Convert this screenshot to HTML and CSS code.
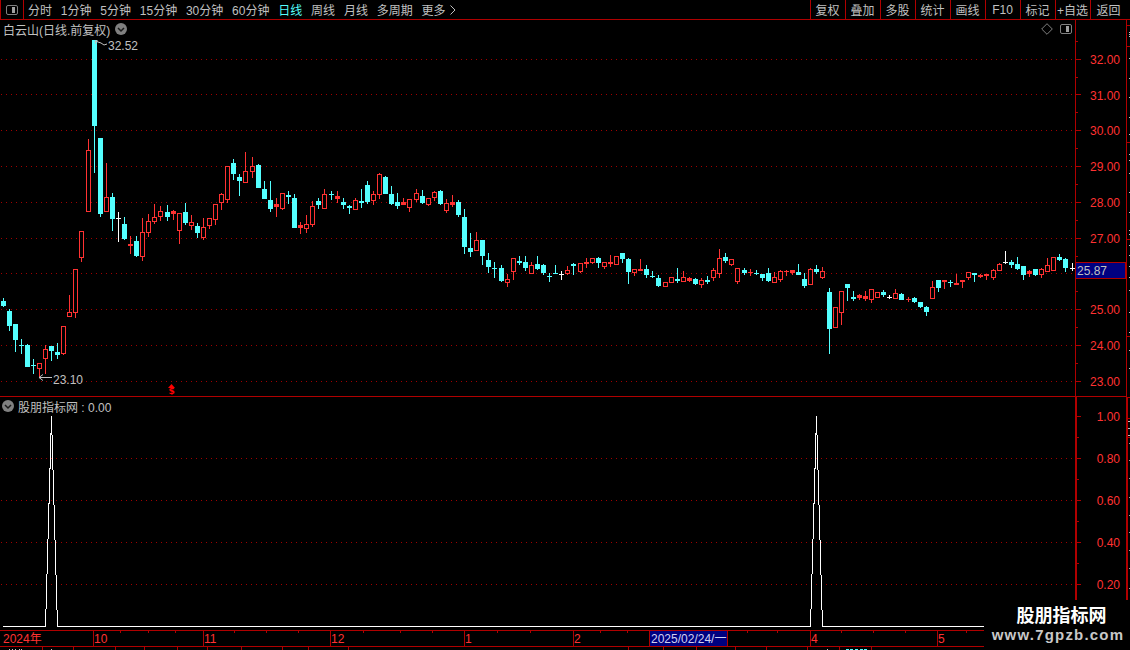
FILE: index.html
```html
<!DOCTYPE html>
<html lang="zh-CN">

<head>
  <meta charset="UTF-8">
  <meta name="viewport" content="width=device-width, initial-scale=1.0">
  <title>白云山 日线</title>
  <link rel="stylesheet" href="styles.css">
</head>

<body>
  <div class="app">
    <header class="toolbar">
      <div class="tool-left">
        <div class="layout-cell">
          <svg class="icon-layout" viewBox="0 0 12 10"><rect x="0.5" y="0.5" width="11" height="9" rx="1.5" /><rect class="fill" x="6" y="2" width="3" height="6" /></svg>
        </div>
        <nav class="periods">
          <span>分时</span>
          <span>1分钟</span>
          <span>5分钟</span>
          <span>15分钟</span>
          <span>30分钟</span>
          <span>60分钟</span>
          <span class="period-active">日线</span>
          <span>周线</span>
          <span>月线</span>
          <span>多周期</span>
          <span>更多 <svg class="icon-more" viewBox="0 0 6 10"><path d="M0.5 0.5 L5 5 L0.5 9.5" /></svg></span>
        </nav>
      </div>
      <div class="tool-right">
        <span class="tool-btn">复权</span>
        <span class="tool-btn">叠加</span>
        <span class="tool-btn">多股</span>
        <span class="tool-btn">统计</span>
        <span class="tool-btn">画线</span>
        <span class="tool-btn">F10</span>
        <span class="tool-btn">标记</span>
        <span class="tool-btn">+自选</span>
        <span class="tool-btn tool-btn-last">返回</span>
      </div>
    </header>

    <div class="panes">
      <div class="charts">
        <section class="pane pane-main">
          <div class="plot">
            <svg id="mainPlot" class="chart" width="1075" height="376" viewBox="0 20 1075 376"></svg>
            <div class="pane-head">
              <div class="head-left">
                <span>白云山(日线.前复权)</span>
                <svg class="icon-toggle" viewBox="0 0 12 12"><circle cx="6" cy="6" r="6" /><path d="M3 5 L6 8 L9 5" /></svg>
              </div>
              <div class="head-right">
                <svg class="icon-diamond" viewBox="0 0 12 12"><path d="M6 0.7 L11.3 6 L6 11.3 L0.7 6 Z" /></svg>
                <svg class="icon-layout" viewBox="0 0 12 10"><rect x="0.5" y="0.5" width="11" height="9" rx="1.5" /><rect class="fill" x="6" y="2" width="3" height="6" /></svg>
              </div>
            </div>
          </div>
          <svg id="mainAxis" class="chart" width="51" height="376" viewBox="1075 20 51 376"></svg>
        </section>

        <section class="pane pane-sub">
          <div class="plot">
            <svg id="subPlot" class="chart" width="1075" height="233" viewBox="0 397 1075 233"></svg>
            <div class="pane-head pane-head-sub">
              <div class="head-left">
                <svg class="icon-toggle" viewBox="0 0 12 12"><circle cx="6" cy="6" r="6" /><path d="M3 5 L6 8 L9 5" /></svg>
                <span>股朋指标网 : 0.00</span>
              </div>
            </div>
          </div>
          <svg id="subAxis" class="chart" width="51" height="233" viewBox="1075 397 51 233"></svg>
        </section>
      </div>
      <svg id="sideStrip" class="chart" width="4" height="610" viewBox="1126 20 4 610"></svg>
    </div>

    <svg id="timeAxis" class="chart" width="1130" height="20" viewBox="0 630 1130 20"></svg>

    <div class="watermark">
      <div class="watermark-name">股朋指标网</div>
      <div class="watermark-url">www.7gpzb.com</div>
    </div>
  </div>
  <script src="chart.js"></script>
</body>

</html>
```

FILE: styles.css
```css
* {
  margin: 0;
  padding: 0;
  box-sizing: border-box;
}

body {
  background-color: #000;
  color: #c0c0c0;
  font-family: "Liberation Sans", "Noto Sans CJK SC", sans-serif;
  font-size: 12px;
  overflow: hidden;
}

.app {
  position: relative;
  display: flex;
  flex-direction: column;
  width: 1130px;
  height: 650px;
  overflow: hidden;
}

.toolbar {
  display: flex;
  justify-content: space-between;
  flex: none;
  height: 20px;
  border-bottom: 1px solid #b00000;
}

.tool-left {
  display: flex;
}

.layout-cell {
  display: flex;
  align-items: center;
  justify-content: center;
  width: 24px;
  border-left: 1px solid #b00000;
  border-right: 1px solid #b00000;
}

.icon-layout {
  display: block;
  width: 12px;
  height: 10px;
}

.icon-layout rect {
  fill: none;
  stroke: #808080;
}

.icon-layout .fill {
  fill: #a0a0a0;
  stroke: none;
}

.periods {
  display: flex;
  align-items: center;
  gap: 8.8px;
  padding-left: 4px;
}

.period-active {
  color: #54fcfc;
}

.icon-more {
  width: 6px;
  height: 10px;
  margin-left: 1px;
}

.icon-more path {
  fill: none;
  stroke: #c0c0c0;
}

.tool-right {
  display: flex;
  margin-right: 3px;
}

.tool-btn {
  display: flex;
  align-items: center;
  justify-content: center;
  width: 35px;
  padding-right: 1px;
  border-left: 1px solid #b00000;
}

.tool-btn-last {
  width: 37px;
}

.panes {
  display: flex;
  flex: none;
  height: 610px;
}

.charts {
  width: 1126px;
}

.pane {
  display: flex;
}

.pane-main {
  height: 377px;
  border-bottom: 1px solid #b00000;
}

.pane-sub {
  height: 233px;
}

.plot {
  position: relative;
  width: 1075px;
}

.chart {
  display: block;
  flex: none;
}

.pane-head {
  position: absolute;
  top: 0;
  left: 0;
  display: flex;
  justify-content: space-between;
  align-items: center;
  width: 100%;
  height: 18px;
  padding: 0 3px;
}

.pane-head-sub {
  padding-left: 2px;
}

.head-left,
.head-right {
  display: flex;
  align-items: center;
}

.head-left {
  gap: 5px;
}

.pane-head-sub .head-left {
  gap: 4px;
}

.head-right {
  gap: 7px;
}

.icon-toggle {
  display: block;
  width: 12px;
  height: 12px;
}

.icon-toggle circle {
  fill: #808080;
}

.icon-toggle path {
  fill: none;
  stroke: #1a1a1a;
  stroke-width: 1.5;
}

.icon-diamond {
  display: block;
  width: 12px;
  height: 12px;
}

.icon-diamond path {
  fill: none;
  stroke: #808080;
}

.chart text {
  font-family: "Liberation Sans", "Noto Sans CJK SC", sans-serif;
  font-size: 12px;
}

.chart .label-red {
  fill: #ff3232;
}

.chart .label-gray {
  fill: #c0c0c0;
}

.chart .label-date {
  fill: #d0d0f0;
}

.chart .signal {
  fill: #ff0000;
  font-family: "DejaVu Sans", sans-serif;
  font-size: 9px;
  font-weight: bold;
}

.grid-line {
  stroke: #a00000;
  stroke-dasharray: 1 4;
  shape-rendering: crispEdges;
}

.spike-line {
  fill: none;
  stroke: #fff;
  shape-rendering: crispEdges;
}

.mark-arrow {
  fill: none;
  stroke: #c0c0c0;
}

.watermark {
  position: absolute;
  right: 0;
  bottom: 0;
  display: flex;
  flex-direction: column;
  align-items: center;
  width: 146px;
  height: 50px;
  padding: 3px 0 0 2px;
  background-color: #000;
}

.watermark-name {
  margin-left: 7px;
  color: #fff;
  font-family: "Noto Sans CJK SC", sans-serif;
  font-size: 18px;
  font-weight: bold;
  line-height: 22px;
}

.watermark-url {
  margin-top: 1px;
  color: #c8c8c8;
  font-size: 15px;
  font-weight: bold;
  letter-spacing: 1.2px;
  line-height: 18px;
}
```

FILE: chart.js
```js
const RED = '#ff3232';
const CYAN = '#54ffff';
const WHITE = '#ffffff';
const LINE_RED = '#b00000';

// 每根K线: 颜色, 最高, 实体上沿, 实体下沿, 最低 (页面像素)
const candles = [
  ['c', 298, 301, 306, 307], ['c', 309, 311, 326, 331], ['c', 324, 324, 340, 352], ['c', 339, 345, 346, 354],
  ['c', 344, 345, 367, 367], ['c', 359, 365, 366, 374], ['r', 363, 363, 369, 377], ['r', 345, 349, 359, 374],
  ['c', 346, 346, 351, 361], ['c', 343, 352, 355, 359], ['r', 326, 326, 354, 355], ['r', 295, 312, 317, 317],
  ['r', 269, 269, 313, 318], ['r', 231, 231, 258, 262], ['r', 139, 150, 212, 212], ['c', 40, 40, 126, 173],
  ['c', 138, 138, 214, 217], ['r', 163, 197, 212, 212], ['c', 193, 197, 219, 231], ['w', 212, 218, 219, 242],
  ['c', 217, 224, 239, 240], ['r', 236, 244, 246, 254], ['c', 236, 241, 256, 257], ['r', 218, 232, 257, 261],
  ['r', 214, 221, 233, 237], ['r', 204, 217, 222, 224], ['r', 206, 211, 217, 221], ['c', 205, 212, 217, 221],
  ['r', 210, 211, 214, 220], ['r', 213, 213, 231, 244], ['c', 203, 212, 223, 225], ['r', 215, 222, 226, 230],
  ['c', 223, 226, 233, 238], ['r', 218, 227, 238, 240], ['r', 218, 218, 226, 229], ['r', 204, 204, 220, 225],
  ['r', 193, 194, 203, 210], ['r', 166, 166, 200, 203], ['c', 159, 163, 174, 180], ['c', 174, 177, 181, 196],
  ['r', 152, 171, 183, 183], ['r', 157, 166, 172, 178], ['c', 164, 165, 188, 188], ['c', 181, 189, 199, 199],
  ['c', 181, 200, 209, 212], ['r', 198, 204, 207, 217], ['r', 193, 193, 209, 210], ['c', 191, 195, 197, 204],
  ['c', 194, 198, 228, 228], ['r', 222, 225, 228, 234], ['r', 215, 224, 229, 233], ['r', 201, 206, 225, 227],
  ['c', 198, 201, 205, 209], ['r', 189, 194, 209, 209], ['c', 191, 194, 195, 200], ['r', 191, 196, 199, 203],
  ['c', 198, 202, 205, 209], ['c', 205, 206, 208, 214], ['r', 198, 200, 210, 210], ['c', 189, 201, 203, 208],
  ['c', 181, 185, 202, 204], ['r', 191, 194, 201, 205], ['r', 173, 174, 195, 199], ['c', 176, 177, 194, 194],
  ['c', 186, 194, 204, 205], ['c', 193, 202, 206, 209], ['r', 198, 202, 205, 205], ['r', 199, 199, 208, 212],
  ['r', 189, 193, 200, 202], ['c', 190, 196, 203, 204], ['r', 198, 198, 205, 206], ['r', 191, 192, 198, 201],
  ['c', 190, 191, 204, 205], ['r', 199, 203, 211, 213], ['r', 195, 202, 205, 207], ['c', 200, 202, 215, 217],
  ['c', 209, 217, 247, 254], ['c', 233, 248, 252, 257], ['r', 232, 240, 251, 251], ['c', 240, 240, 256, 265],
  ['c', 253, 260, 267, 273], ['c', 262, 268, 269, 278], ['c', 265, 268, 281, 282], ['r', 274, 279, 283, 287],
  ['r', 258, 258, 272, 280], ['c', 256, 261, 263, 265], ['c', 256, 262, 268, 271], ['r', 262, 265, 274, 274],
  ['c', 256, 264, 269, 270], ['c', 264, 265, 273, 275], ['c', 273, 276, 277, 282], ['c', 265, 273, 274, 274],
  ['w', 271, 274, 275, 280], ['r', 266, 270, 274, 275], ['c', 263, 264, 266, 275], ['r', 263, 263, 272, 273],
  ['r', 258, 262, 264, 268], ['r', 258, 258, 263, 264], ['c', 257, 258, 263, 268], ['r', 262, 262, 267, 269],
  ['r', 255, 262, 264, 267], ['r', 256, 256, 265, 265], ['c', 253, 253, 259, 263], ['c', 258, 259, 272, 284],
  ['r', 269, 269, 273, 276], ['r', 259, 269, 271, 271], ['c', 265, 269, 275, 278], ['c', 271, 276, 277, 278],
  ['c', 275, 278, 286, 287], ['r', 282, 282, 287, 287], ['r', 277, 277, 283, 283], ['c', 268, 279, 281, 283],
  ['r', 271, 277, 282, 282], ['r', 277, 278, 281, 282], ['c', 278, 279, 284, 285], ['r', 278, 280, 285, 288],
  ['c', 276, 280, 282, 284], ['r', 268, 270, 278, 281], ['r', 249, 258, 274, 278], ['c', 253, 257, 261, 263],
  ['r', 259, 259, 265, 266], ['r', 268, 268, 282, 284], ['c', 268, 270, 273, 275], ['r', 269, 272, 273, 276],
  ['c', 270, 273, 274, 275], ['c', 274, 274, 278, 281], ['c', 268, 273, 281, 282], ['r', 272, 277, 283, 283],
  ['r', 270, 271, 280, 282], ['r', 270, 271, 272, 276], ['r', 270, 270, 273, 275], ['c', 264, 272, 275, 275],
  ['c', 273, 279, 286, 288], ['r', 268, 269, 285, 285], ['c', 265, 269, 272, 274], ['r', 267, 271, 278, 279],
  ['c', 288, 292, 329, 354], ['r', 307, 307, 328, 328], ['r', 291, 291, 313, 325], ['c', 284, 284, 288, 301],
  ['c', 291, 297, 299, 301], ['r', 294, 295, 298, 300], ['r', 291, 296, 299, 301], ['r', 289, 289, 300, 303],
  ['r', 292, 292, 298, 298], ['c', 290, 292, 295, 297], ['w', 295, 297, 298, 299], ['r', 289, 293, 299, 299],
  ['c', 293, 294, 300, 300], ['r', 297, 299, 300, 302], ['c', 297, 298, 302, 303], ['c', 302, 302, 307, 308],
  ['c', 306, 307, 312, 316], ['r', 281, 287, 299, 299], ['c', 280, 280, 288, 292], ['r', 280, 280, 282, 289],
  ['c', 280, 282, 283, 287], ['r', 274, 283, 285, 285], ['r', 280, 280, 282, 288], ['r', 272, 272, 278, 280],
  ['c', 273, 273, 275, 282], ['r', 274, 275, 277, 278], ['r', 274, 274, 276, 280], ['r', 269, 270, 278, 280],
  ['r', 263, 264, 271, 271], ['w', 251, 262, 263, 264], ['c', 260, 262, 265, 268], ['c', 257, 264, 269, 270],
  ['c', 266, 266, 275, 280], ['r', 270, 271, 274, 277], ['c', 269, 269, 275, 276], ['r', 268, 269, 275, 278],
  ['r', 258, 265, 272, 272], ['r', 257, 257, 271, 271], ['c', 254, 257, 260, 261], ['c', 258, 259, 268, 272],
  ['w', 263, 268, 269, 271]
];

const priceLabels = [[32, 59], [31, 95], [30, 130], [29, 166], [28, 202], [27, 238], [25, 309], [24, 345], [23, 381]];

function rect(x, y, w, h, color) {
  return `<rect x="${x}" y="${y}" width="${w}" height="${h}" fill="${color}" shape-rendering="crispEdges" />`;
}

function dotted(y, x2) {
  return `<line class="grid-line" x1="1" y1="${y + 0.5}" x2="${x2}" y2="${y + 0.5}" />`;
}

function label(x, y, text, cls, anchor) {
  return `<text x="${x}" y="${y}" class="${cls}" text-anchor="${anchor || 'start'}">${text}</text>`;
}

// K线
function drawCandle(c, k) {
  const x = Math.floor(k * 6.074 + 0.005) + 1;
  const color = c[0] === 'r' ? RED : c[0] === 'c' ? CYAN : WHITE;
  const bodyH = c[3] - c[2];
  let out = rect(x + 2, c[1], 1, c[4] - c[1], color);
  if (c[0] === 'r' && bodyH >= 4) {
    out += rect(x, c[2], 5, bodyH, color) + rect(x + 1, c[2] + 1, 3, bodyH - 2, '#000');
  } else {
    out += rect(x, c[2], 5, bodyH, color);
  }
  return out;
}

function drawMain() {
  let out = '';
  [59, 94, 130, 166, 202, 238, 273, 309, 345, 381].forEach(y => { out += dotted(y, 1075); });
  candles.forEach((c, k) => { out += drawCandle(c, k); });
  // 最高最低价标注
  out += '<path class="mark-arrow" d="M95 41 L101 43 L104 45 L107 44 M95 41 L98 41 M95 41 L96 44" />';
  out += label(108, 50, '32.52', 'label-gray');
  out += '<path class="mark-arrow" d="M39 377.5 L52 377.5 M39 377.5 L43 374.5 M39 377.5 L43 380.5" />';
  out += label(53, 384, '23.10', 'label-gray');
  // 信号
  out += '<path d="M171.5 384 L175 388 L168 388 Z" fill="#ff0000" />';
  out += label(168.5, 394, '$', 'signal');
  document.getElementById('mainPlot').innerHTML = out;
}

function drawMainAxis() {
  let out = rect(1075, 20, 1, 376, LINE_RED);
  [59, 94, 130, 166, 202, 238, 273, 309, 345, 381].forEach(y => { out += rect(1076, y, 5, 1, LINE_RED); });
  [41, 77, 112, 148, 184, 220, 256, 291, 327, 363].forEach(y => { out += rect(1076, y, 2, 1, LINE_RED); });
  priceLabels.forEach(p => { out += label(1120, p[1] + 5, p[0].toFixed(2), 'label-red', 'end'); });
  out += rect(1075, 262, 51, 17, LINE_RED) + rect(1076, 263, 49, 15, '#000080');
  out += label(1077, 275, '25.87', 'label-gray');
  document.getElementById('mainAxis').innerHTML = out;
}

function drawSub() {
  let out = '';
  [458, 500, 542, 584].forEach(y => { out += dotted(y, 1075); });
  out += '<polyline class="spike-line" points="3,626.5 45.5,626.5 51.5,416.5 57.5,626.5 810.5,626.5 816.5,416.5 822.5,626.5 990,626.5" />';
  document.getElementById('subPlot').innerHTML = out;
}

function drawSubAxis() {
  let out = rect(1075, 397, 2, 233, LINE_RED);
  [[1, 416], [0.8, 458], [0.6, 500], [0.4, 542], [0.2, 584]].forEach(p => {
    out += rect(1077, p[1], 4, 1, LINE_RED);
    out += label(1120, p[1] + 5, p[0].toFixed(2), 'label-red', 'end');
  });
  [437, 479, 521, 563].forEach(y => { out += rect(1077, y, 2, 1, LINE_RED); });
  document.getElementById('subAxis').innerHTML = out;
}

// 右侧被截断的一条
function drawSide() {
  let out = rect(1126, 20, 1, 377, LINE_RED) + rect(1126, 397, 2, 233, LINE_RED);
  [25, 46, 142, 239, 336, 397, 418, 437].forEach(y => { out += rect(1127, y, 3, 1, LINE_RED); });
  [32, 34, 36, 58, 78, 97, 117, 134, 154, 160, 173, 192, 212, 230, 234, 245, 255, 266, 277, 290, 312, 332, 350, 368].forEach(y => {
    out += rect(1129, y, 1, 1, '#c0c0c0');
  });
  [421, 428, 435].forEach(y => { out += rect(1128, y, 2, 1, '#c0c0c0'); });
  [443, 460, 478, 497, 515, 532, 550, 568, 588].forEach(y => { out += rect(1129, y, 1, 1, '#a0a0a0'); });
  document.getElementById('sideStrip').innerHTML = out;
}

function drawTime() {
  let out = rect(0, 630, 1130, 1, LINE_RED) + rect(0, 646, 1130, 1, LINE_RED);
  [93, 203, 330, 464, 573, 810, 937].forEach(x => { out += rect(x, 630, 1, 16, LINE_RED); });
  [120, 148, 175, 234, 266, 298, 363, 400, 432, 497, 530, 600, 627, 747, 777, 841, 873, 905, 966].forEach(x => {
    out += rect(x, 631, 1, 2, LINE_RED);
  });
  [['2024年', 3], ['10', 94], ['11', 204], ['12', 331], ['1', 465], ['2', 574], ['4', 811], ['5', 938]].forEach(t => {
    out += label(t[1], 643, t[0], 'label-red');
  });
  out += rect(649, 630, 79, 17, LINE_RED) + rect(650, 631, 77, 15, '#000080');
  out += label(651, 643, '2025/02/24/一', 'label-date');
  // 底部一排
  [42, 73, 115, 144, 177, 207, 241, 282, 308, 348, 628, 663, 696, 735, 766, 807, 839, 871].forEach(x => {
    out += rect(x, 647, 1, 3, LINE_RED);
  });
  [9, 12, 15, 19, 21, 51, 827].forEach(x => { out += rect(x, 649, 1, 1, '#c0c0c0'); });
  [846, 850, 855, 860, 864].forEach(x => { out += rect(x, 649, 3, 1, CYAN); });
  document.getElementById('timeAxis').innerHTML = out;
}

drawMain();
drawMainAxis();
drawSub();
drawSubAxis();
drawSide();
drawTime();
```
